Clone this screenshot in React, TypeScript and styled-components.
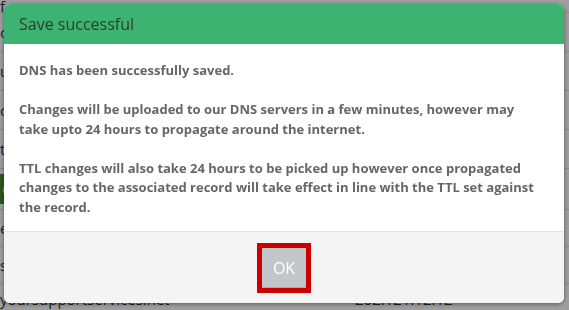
import styled, { createGlobalStyle } from "styled-components";

const GlobalStyle = createGlobalStyle`
  html, body {
    margin: 0;
    padding: 0;
    background: #ffffff;
    font-family: "Open Sans", "Liberation Sans", sans-serif;
    overflow: hidden;
  }
`;

const Page = styled.div`
  width: 569px;
  height: 310px;
  display: flex;
  flex-direction: column;
  color: #333;
  font-size: 15px;
  overflow: hidden;
`;

const Row = styled.div<{ h: number }>`
  height: ${(p) => p.h}px;
  flex-shrink: 0;
  display: flex;
  align-items: center;
  border-bottom: 1px solid #dcdcdc;
`;

const Cell = styled.div<{ w: number }>`
  width: ${(p) => p.w}px;
  white-space: nowrap;
  overflow: hidden;
`;

const GreenBtn = styled.div`
  width: 60px;
  height: 30px;
  background: #4e8a2c;
  color: #fff;
  display: flex;
  align-items: center;
  padding-left: 2px;
`;

const Overlay = styled.div`
  position: fixed;
  inset: 0;
  background: rgba(0, 0, 0, 0.38);
`;

const Modal = styled.div`
  position: fixed;
  top: 4px;
  left: 4px;
  width: 560px;
  height: 299px;
  display: flex;
  flex-direction: column;
  border-radius: 6px;
  overflow: hidden;
  background: #fff;
  box-shadow: 0 1px 4px rgba(0, 0, 0, 0.45);
`;

const Header = styled.div`
  height: 40px;
  flex-shrink: 0;
  background: #3cb371;
  color: #2f3b34;
  font-size: 16px;
  display: flex;
  align-items: center;
  padding: 0 15px;
`;

const Body = styled.div`
  padding: 17px 22px 14px 15px;
  font-size: 13px;
  font-weight: 700;
  line-height: 19.5px;
  color: #666;
`;

const Footer = styled.div`
  flex: 1;
  background: #f4f4f4;
  border-top: 1px solid #e2e2e2;
  display: flex;
  align-items: center;
  justify-content: center;
`;

const OkButton = styled.button`
  width: 44px;
  height: 40px;
  border: none;
  border-bottom: 1px solid #a8acae;
  background: #c2c6c8;
  color: #fff;
  font-family: "Open Sans", "Liberation Sans", sans-serif;
  font-size: 16px;
  outline: 5px solid #cc0000;
  padding: 0;
  margin-top: 1px;
`;

export default function App() {
  return (
    <>
      <GlobalStyle />
      <Page>
        <Row h={12}>
          <Cell w={350}>f</Cell>
        </Row>
        <Row h={38}>
          <Cell w={350}>c</Cell>
        </Row>
        <Row h={38}>
          <Cell w={350}>u</Cell>
        </Row>
        <Row h={38}>
          <Cell w={350}>c</Cell>
        </Row>
        <Row h={38}>
          <Cell w={350}>t</Cell>
        </Row>
        <Row h={40}>
          <GreenBtn>C</GreenBtn>
        </Row>
        <Row h={36}>
          <Cell w={350}>e</Cell>
        </Row>
        <Row h={36}>
          <Cell w={350}>s</Cell>
        </Row>
        <Row h={30}>
          <Cell w={355}>yoursupportservices.net</Cell>
          <Cell w={150}>202.121.12.12</Cell>
        </Row>
      </Page>
      <Overlay />
      <Modal>
        <Header>Save successful</Header>
        <Body>
          DNS has been successfully saved.
          <br />
          <br />
          Changes will be uploaded to our DNS servers in a few minutes, however
          may take upto 24 hours to propagate around the internet.
          <br />
          <br />
          TTL changes will also take 24 hours to be picked up however once
          propagated changes to the associated record will take effect in line
          with the TTL set against the record.
        </Body>
        <Footer>
          <OkButton>OK</OkButton>
        </Footer>
      </Modal>
    </>
  );
}
